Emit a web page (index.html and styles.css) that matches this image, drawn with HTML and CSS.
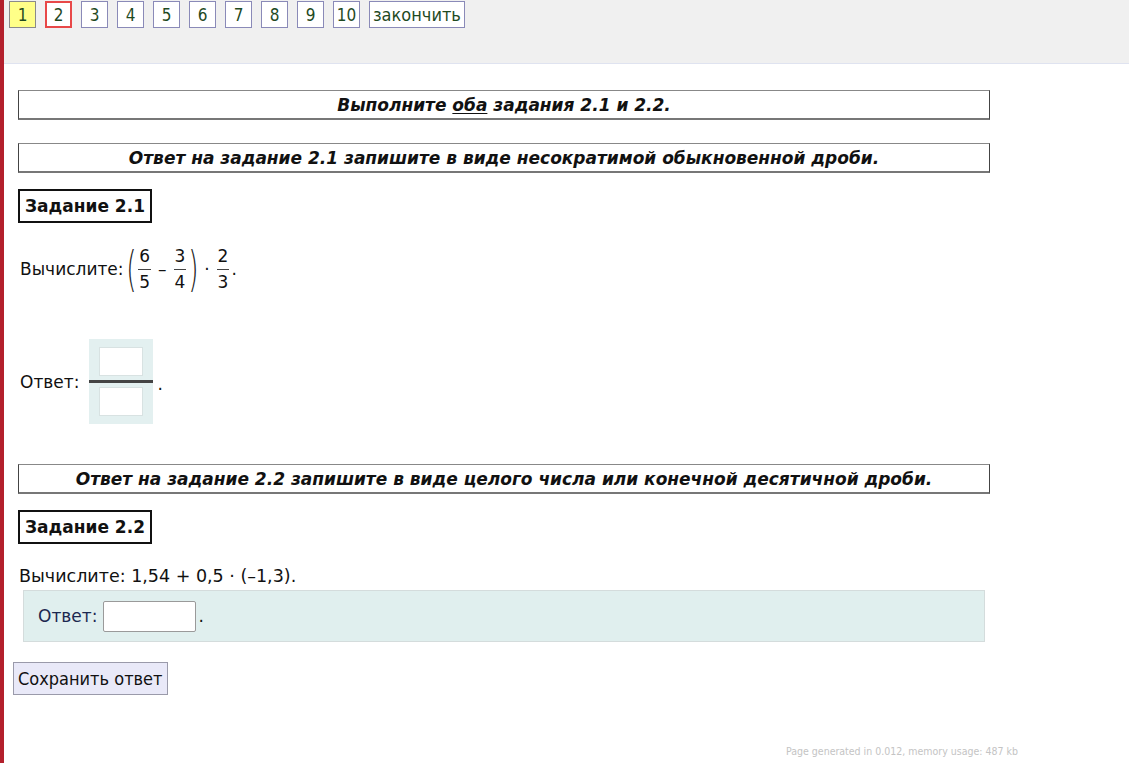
FILE: index.html
```html
<!DOCTYPE html>
<html lang="ru">
<head>
<meta charset="utf-8">
<title>Задание 2</title>
<link rel="stylesheet" href="styles.css">
</head>
<body>
<div class="page">
  <div class="topbar">
    <span class="nav nav-done">1</span>
    <span class="nav nav-current">2</span>
    <span class="nav">3</span>
    <span class="nav">4</span>
    <span class="nav">5</span>
    <span class="nav">6</span>
    <span class="nav">7</span>
    <span class="nav">8</span>
    <span class="nav">9</span>
    <span class="nav">10</span>
    <span class="nav nav-finish">закончить</span>
  </div>
  <div class="content">
    <div class="instr instr-first"><span>Выполните <u>оба</u> задания 2.1 и 2.2.</span></div>
    <div class="instr"><span>Ответ на задание 2.1 запишите в виде несократимой обыкновенной дроби.</span></div>
    <div class="task-title">Задание 2.1</div>
    <div class="expr">
      <span class="lead">Вычислите:</span>
      <span class="paren">(</span>
      <span class="frac"><span class="num">6</span><span class="den">5</span></span>
      <span class="op">–</span>
      <span class="frac"><span class="num">3</span><span class="den">4</span></span>
      <span class="paren">)</span>
      <span class="op">·</span>
      <span class="frac"><span class="num">2</span><span class="den">3</span></span><span class="dot">.</span>
    </div>
    <div class="answer-frac">
      <span>Ответ:</span>
      <div class="frac-box">
        <div class="frac-input"></div>
        <div class="frac-line"></div>
        <div class="frac-input"></div>
      </div>
      <span class="dot">.</span>
    </div>
    <div class="instr instr-third"><span>Ответ на задание 2.2 запишите в виде целого числа или конечной десятичной дроби.</span></div>
    <div class="task-title">Задание 2.2</div>
    <div class="plain">Вычислите: 1,54 + 0,5 · (–1,3).</div>
    <div class="answer-panel">
      <span>Ответ:</span>
      <span class="text-input"></span>
      <span class="dot">.</span>
    </div>
    <button class="save" type="button">Сохранить ответ</button>
  </div>
  <div class="footer">Page generated in 0.012, memory usage: 487 kb</div>
</div>
</body>
</html>
```

FILE: styles.css
```css
html, body {
  margin: 0;
  padding: 0;
  background: #fff;
}
body {
  font-family: "DejaVu Sans", sans-serif;
  color: #111;
}
.page {
  border-left: 4px solid #b3202c;
  min-height: 763px;
  box-sizing: border-box;
  position: relative;
}
.topbar {
  background: #f0f0f0;
  height: 62px;
  border-bottom: 1px solid #dfe3f0;
  display: flex;
  align-items: flex-start;
  gap: 9px;
  padding: 1px 0 0 5px;
  box-sizing: content-box;
  font-family: "DejaVu Sans Condensed", "DejaVu Sans", sans-serif;
}
.nav {
  display: flex;
  align-items: center;
  justify-content: center;
  min-width: 25px;
  height: 25px;
  border: 1px solid #8a8ab8;
  background: #fff;
  color: #1f4a1f;
  font-size: 17px;
  padding: 0;
}
.nav-done {
  background: #ffff88;
  border-color: #8a8a8a;
}
.nav-current {
  border: 2px solid #e84848;
  min-width: 23px;
  height: 23px;
}
.nav-finish {
  padding: 0 3px 0 3px;
  font-size: 18px;
}
.content {
  padding: 0 0 0 14px;
}
.instr {
  width: 970px;
  height: 27px;
  border: 1px solid #444;
  border-top-color: #888;
  border-bottom: 2px solid #777;
  display: flex;
  align-items: center;
  justify-content: center;
  font-weight: bold;
  font-style: italic;
  font-size: 17px;
  margin-top: 23px;
}
.instr-first {
  margin-top: 26px;
}
.instr-third {
  margin-top: 40px;
}
.instr u {
  text-decoration-thickness: 1px;
  text-underline-offset: 2px;
}
.task-title {
  display: inline-block;
  border: 2px solid #111;
  padding: 4px 5px 4px 5px;
  font-weight: bold;
  font-size: 17px;
  margin-top: 16px;
  height: 22px;
  line-height: 22px;
}
.expr {
  display: flex;
  align-items: center;
  margin-top: 22px;
  font-size: 17px;
  padding-left: 2px;
  gap: 4px;
}
.paren {
  font-size: 48px;
  font-weight: 100;
  line-height: 1;
  transform: scaleX(0.55);
  margin: 0 -6px;
  color: #222;
}
.frac {
  display: inline-flex;
  flex-direction: column;
  align-items: center;
  font-size: 17px;
  line-height: 19px;
}
.frac .num {
  border-bottom: 1px solid #444;
  padding: 0 1px 3px;
}
.frac .den {
  padding-top: 3px;
}
.op {
  margin: 0 3px;
}
.dot {
  margin-left: -2px;
}
.answer-frac {
  display: flex;
  align-items: center;
  gap: 10px;
  margin-top: 46px;
  font-size: 17px;
  padding-left: 2px;
}
.frac-box {
  background: #e3f0f0;
  width: 64px;
  padding: 8px 0;
  display: flex;
  flex-direction: column;
  align-items: center;
}
.frac-input {
  width: 42px;
  height: 27px;
  background: #fff;
  border: 1px solid #d8e2e2;
}
.frac-line {
  width: 64px;
  height: 3px;
  background: #444;
  margin: 4px 0 4px;
}
.answer-frac .dot {
  margin-left: -6px;
  margin-top: 4px;
}
.plain {
  font-size: 17.5px;
  margin-top: 22px;
  padding-left: 1px;
}
.answer-panel {
  margin: 4px 0 0 5px;
  width: 946px;
  height: 50px;
  background: #e0efee;
  border: 1px solid #d4dcdc;
  display: flex;
  align-items: center;
  padding-left: 14px;
  box-sizing: content-box;
  gap: 6px;
  font-size: 17px;
  color: #1c2850;
}
.answer-panel .dot {
  margin-left: -4px;
  color: #111;
}
.text-input {
  width: 91px;
  height: 29px;
  background: #fff;
  border: 1px solid #9a9a9a;
  border-radius: 2px;
}
.save {
  display: block;
  margin: 20px 0 0 -5px;
  font-family: "DejaVu Sans Condensed", "DejaVu Sans", sans-serif;
  font-size: 18px;
  color: #111;
  background: #e9e9f8;
  border: 1px solid #9a9aaa;
  padding: 3px 4px;
  height: 33px;
}
.footer {
  position: absolute;
  left: 782px;
  top: 745px;
  font-size: 10.5px;
  color: #c4c4c4;
  font-family: "DejaVu Sans Condensed", "DejaVu Sans", sans-serif;
}
```
